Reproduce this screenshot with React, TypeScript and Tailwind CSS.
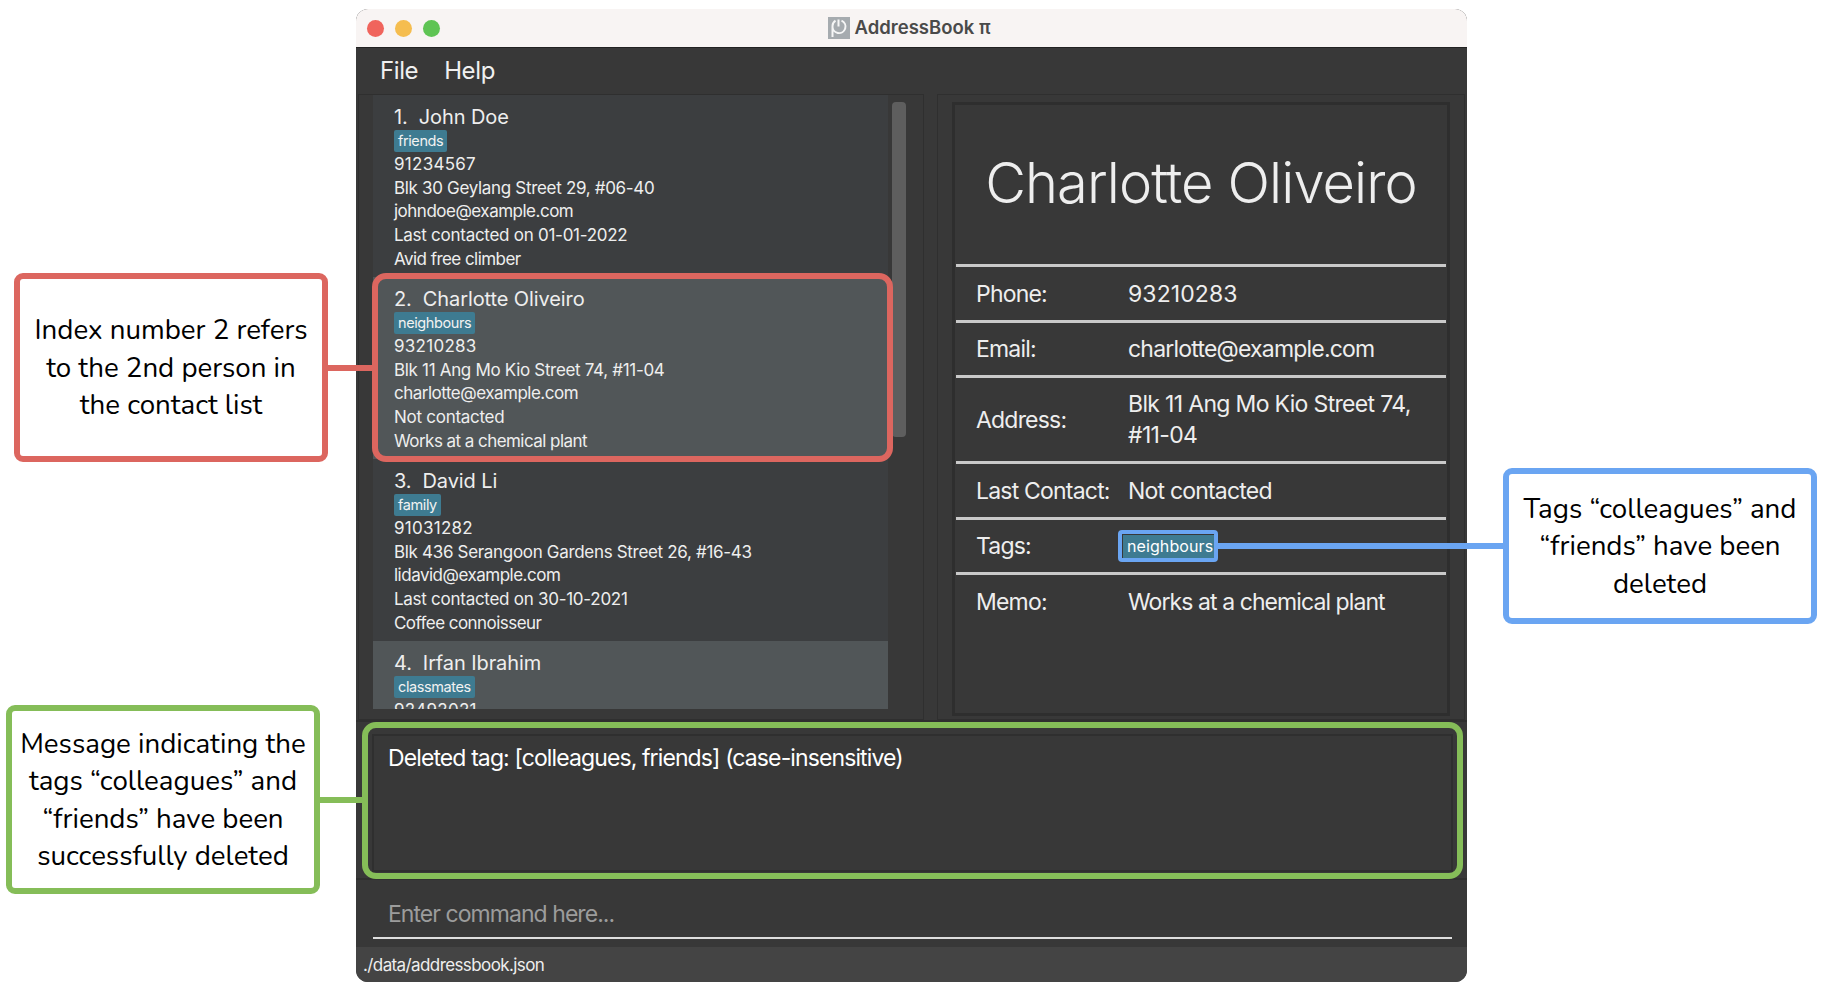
const contacts = [
  { name: "1.  John Doe", tag: "friends", phone: "91234567", address: "Blk 30 Geylang Street 29, #06-40", email: "johndoe@example.com", last: "Last contacted on 01-01-2022", memo: "Avid free climber" },
  { name: "2.  Charlotte Oliveiro", tag: "neighbours", phone: "93210283", address: "Blk 11 Ang Mo Kio Street 74, #11-04", email: "charlotte@example.com", last: "Not contacted", memo: "Works at a chemical plant" },
  { name: "3.  David Li", tag: "family", phone: "91031282", address: "Blk 436 Serangoon Gardens Street 26, #16-43", email: "lidavid@example.com", last: "Last contacted on 30-10-2021", memo: "Coffee connoisseur" },
  { name: "4.  Irfan Ibrahim", tag: "classmates", phone: "92492021", address: "Blk 47 Tampines Street 20, #17-35", email: "irfan@example.com", last: "Not contacted", memo: "" },
];

const Tag = ({ label }: { label: string }) => (
  <div className="w-fit h-[22px] mb-[1px] px-[4px] rounded-[2px] bg-[#3e7b91] text-[14.5px] leading-[22px] tracking-[-0.4px] text-[#f2f2f2]">{label}</div>
);

const ContactCard = ({ contact, index }: { contact: (typeof contacts)[number]; index: number }) => (
  <div className={`h-[182px] shrink-0 pl-[21px] pt-[9px] text-[17px] leading-[23.7px] text-[#eeeeee] ${index % 2 === 0 ? "bg-[#3c3e40]" : "bg-[#515658]"}`}>
    <div className="h-[26px] text-[20px] leading-[26px] tracking-[-0.1px] whitespace-pre">{contact.name}</div>
    <Tag label={contact.tag} />
    <div className="tracking-[0.27px]">{contact.phone}</div>
    <div className="tracking-[-0.32px]">{contact.address}</div>
    <div className="tracking-[-0.5px]">{contact.email}</div>
    <div className="tracking-[-0.27px]">{contact.last}</div>
    <div className="tracking-[-0.55px]">{contact.memo}</div>
  </div>
);

const DetailRow = ({ label, height, children }: { label: string; height: string; children: React.ReactNode }) => (
  <div className={`flex items-center pl-[20px] pt-[1px] border-t-[3px] border-[#c9c9c9] ${height}`}>
    <div className="w-[152px] shrink-0">{label}</div>
    <div>{children}</div>
  </div>
);

const Callout = ({ className, children }: { className: string; children: React.ReactNode }) => (
  <div className={`absolute flex items-center justify-center text-center bg-white border-[6px] rounded-[9px] pt-[2px] text-black text-[27.7px] leading-[37.5px] font-['Nunito','Lato',sans-serif] ${className}`}>
    <div>{children}</div>
  </div>
);

export default function App() {
  return (
    <div className="relative w-[1826px] h-[992px] overflow-hidden bg-white pt-[9px] pl-[356px] font-['Inter',sans-serif]">
      <div className="flex flex-col w-[1111px] h-[973px] rounded-[12px] overflow-hidden bg-[#383838]">
        <div className="relative flex items-center justify-center h-[39px] shrink-0 bg-[#f8f4f3] border-b border-[#222222]">
          <div className="absolute left-[11px] flex gap-[11px]">
            <span className="w-[17px] h-[17px] rounded-full bg-[#f0645c]" />
            <span className="w-[17px] h-[17px] rounded-full bg-[#f5bd4f]" />
            <span className="w-[17px] h-[17px] rounded-full bg-[#5fc454]" />
          </div>
          <div className="flex items-center gap-[5px] mr-[5px] text-[18.5px] font-semibold text-[#4a4a4a]">
            <svg width="22" height="22" viewBox="0 0 22 22">
              <rect width="22" height="22" fill="#a6abaf" />
              <path d="M7.5 3.6A6.5 6.5 0 0 0 4.5 9V20M13.5 3.6A6.5 6.5 0 1 1 4.5 9M10.5 2.5V9.5" fill="none" stroke="#f6f6f6" strokeWidth="2" />
            </svg>
            <span>AddressBook π</span>
          </div>
        </div>
        <div className="flex items-center gap-[26px] h-[46px] shrink-0 pl-[24px] text-[24px] tracking-[-0.4px] text-[#f0f0f0]">
          <span>File</span>
          <span>Help</span>
        </div>

        <div className="flex h-[628px] shrink-0 gap-[13px] pl-[2px] pr-[2px] border-b-2 border-[#2f2f2f]">
          <div className="relative w-[566px] border border-[#2f2f2f] pl-[14px] overflow-hidden">
            <div className="flex flex-col w-[515px] h-[614px] overflow-hidden">
              {contacts.map((c, i) => (
                <ContactCard key={c.name} contact={c} index={i} />
              ))}
            </div>
            <div className="absolute left-[533px] top-[7px] w-[14px] h-[335px] rounded-[4px] bg-[#5e5e5e]" />
          </div>
          <div className="flex-1 border border-[#2f2f2f] px-[14px] pt-[7px] pb-[3px]">
            <div className="flex flex-col h-full border-[3px] border-[#2e2e2e] px-[1px] text-[23px] tracking-[-0.8px] text-[#eeeeee]">
              <div className="flex items-center justify-center h-[159px] shrink-0 text-[56px] tracking-[-0.9px] font-light pb-[4px]">Charlotte Oliveiro</div>
              <DetailRow label="Phone:" height="h-[56px]">
                <span className="tracking-[0.1px]">93210283</span>
              </DetailRow>
              <DetailRow label="Email:" height="h-[55px]">charlotte@example.com</DetailRow>
              <DetailRow label="Address:" height="h-[86px]">
                <div className="leading-[31px] tracking-[-0.67px]">Blk 11 Ang Mo Kio Street 74,<br />#11-04</div>
              </DetailRow>
              <DetailRow label="Last Contact:" height="h-[56px]">Not contacted</DetailRow>
              <DetailRow label="Tags:" height="h-[55px]">
                <div className="h-[24px] px-[4px] -ml-[5px] bg-[#3e7b91] text-[16px] leading-[22px] tracking-[0.1px] text-white">neighbours</div>
              </DetailRow>
              <div className="flex-1 flex pl-[20px] pt-[10px] border-t-[3px] border-[#c9c9c9]">
                <div className="w-[152px] shrink-0">Memo:</div>
                <div className="tracking-[-0.92px]">Works at a chemical plant</div>
              </div>
            </div>
          </div>
        </div>

        <div className="h-[158px] shrink-0 pl-[16px] pr-[14px] pt-[12px] pb-[6px] border-b-2 border-[#2f2f2f]">
          <div className="h-full border-2 border-[#2f2f2f] pl-[14px] pt-[6px] text-[23px] tracking-[-0.89px] leading-[32px] text-white">
            Deleted tag: [colleagues, friends] (case-insensitive)
          </div>
        </div>

        <div className="h-[67px] shrink-0 pl-[17px] pr-[15px] pt-[16px]">
          <div className="h-[43px] pl-[15px] border-b-2 border-[#dedede] text-[23px] leading-[36px] tracking-[-0.95px] text-[#9c9c9c]">Enter command here...</div>
        </div>

        <div className="flex-1 flex items-center pl-[7px] pt-[2px] bg-[#444444] text-[17px] tracking-[-0.6px] text-[#eeeeee]">./data/addressbook.json</div>
      </div>

      {/* annotations sit on top of the app window */}
      <div className="absolute left-[372px] top-[273px] w-[521px] h-[189px] border-[6px] border-[#dc665f] rounded-[14px]" />
      <div className="absolute left-[328px] top-[365px] w-[44px] h-[6px] bg-[#dc665f]" />
      <Callout className="left-[14px] top-[273px] w-[314px] h-[189px] border-[#dc665f]">
        Index number 2 refers<br />to the 2nd person in<br />the contact list
      </Callout>

      <div className="absolute left-[362px] top-[722px] w-[1101px] h-[157px] border-[6px] border-[#85bd58] rounded-[14px]" />
      <div className="absolute left-[320px] top-[797px] w-[42px] h-[6px] bg-[#85bd58]" />
      <Callout className="left-[6px] top-[705px] w-[314px] h-[189px] border-[#85bd58]">
        Message indicating the<br />tags “colleagues” and<br />“friends” have been<br />successfully deleted
      </Callout>

      <div className="absolute left-[1118px] top-[530px] w-[100px] h-[32px] border-[4px] border-[#6aa5f2] rounded-[4px]" />
      <div className="absolute left-[1218px] top-[543px] w-[285px] h-[6px] bg-[#6aa5f2]" />
      <Callout className="left-[1503px] top-[468px] w-[314px] h-[156px] border-[#6aa5f2]">
        Tags “colleagues” and<br />“friends” have been<br />deleted
      </Callout>
    </div>
  );
}
